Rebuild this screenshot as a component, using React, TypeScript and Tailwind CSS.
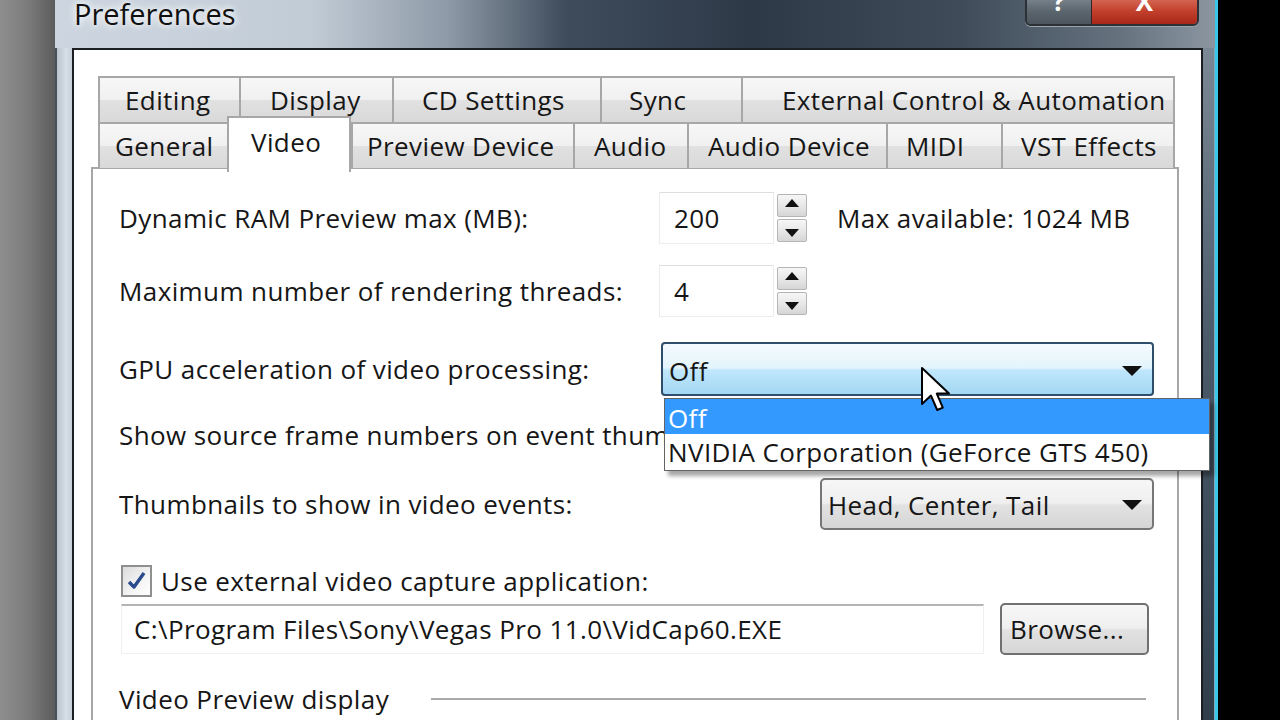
import React from "react";

function Spinner() {
  return (
    <div className="ml-[3px] flex h-[48px] w-[30px] flex-col gap-[2px]">
      <div className="flex h-[23px] items-start justify-center rounded-[2px] border border-[#b5b5b5] bg-[linear-gradient(180deg,#f6f6f6_0%,#e8e8e8_50%,#d6d6d6_100%)] pt-[4px]">
        <svg width="14" height="8" viewBox="0 0 14 8"><path d="M7 0 L14 8 L0 8 Z" fill="#111" /></svg>
      </div>
      <div className="flex h-[23px] items-end justify-center rounded-[2px] border border-[#b5b5b5] bg-[linear-gradient(180deg,#f6f6f6_0%,#e8e8e8_50%,#d6d6d6_100%)] pb-[4px]">
        <svg width="14" height="8" viewBox="0 0 14 8"><path d="M0 0 L14 0 L7 8 Z" fill="#111" /></svg>
      </div>
    </div>
  );
}

function DownArrow() {
  return (
    <svg width="20" height="10" viewBox="0 0 20 10"><path d="M0 0 L20 0 L10 10 Z" fill="#111" /></svg>
  );
}

export default function App() {
  const row1 = [
    { t: "Editing", w: 141, pl: 25 },
    { t: "Display", w: 153, pl: 29 },
    { t: "CD Settings", w: 208, pl: 28 },
    { t: "Sync", w: 141, pl: 27 },
    { t: "External Control & Automation", w: 434, pl: 39 },
  ];
  const row2 = [
    { t: "General", w: 129, pl: 15 },
    { t: "Video", w: 124, pl: 22, sel: true },
    { t: "Preview Device", w: 222, pl: 14 },
    { t: "Audio", w: 114, pl: 19 },
    { t: "Audio Device", w: 199, pl: 19 },
    { t: "MIDI", w: 115, pl: 18 },
    { t: "VST Effects", w: 174, pl: 18 },
  ];

  return (
    <div className="relative flex h-[720px] w-[1280px] overflow-hidden bg-black font-['Open_Sans',sans-serif] text-[26px] tracking-[0.4px] text-[#161616]">
      {/* desktop behind */}
      <div className="w-[55px] shrink-0 bg-[linear-gradient(90deg,#8e8e8e_0%,#7c7c7c_50%,#5c5c5c_100%)]" />

      {/* window */}
      <div className="flex w-[1160px] shrink-0 flex-col">
        {/* title bar */}
        <div className="relative h-[48px] shrink-0 bg-[linear-gradient(90deg,#cdd6e0_0%,#c2ccd7_22%,#8d99a6_34%,#3f4c5b_44%,#2d3947_60%,#3f4b59_78%,#66737f_92%,#8b96a1_100%)]">
          <div className="absolute left-[19px] top-[-8px] text-[29px] tracking-[0px] text-[#101010] [text-shadow:0_0_10px_#ffffff,0_0_6px_#ffffff]">
            Preferences
          </div>
          {/* caption buttons */}
          <div className="absolute left-[970px] top-[-4px] flex h-[30px] overflow-hidden rounded-b-[6px] border-2 border-[#2c3136] shadow-[0_1px_0_#9aa4ae]">
            <div className="flex w-[64px] items-end justify-center bg-[linear-gradient(180deg,#7b858f_0%,#5c666f_50%,#4d565e_100%)] pb-[10px] text-[26px] font-bold leading-none text-white">
              ?
            </div>
            <div className="flex w-[106px] items-end justify-center border-l border-[#3a2020] bg-[linear-gradient(180deg,#d66a58_0%,#c2402c_50%,#a8271a_100%)] pb-[10px] text-[26px] font-bold leading-none text-white">
              X
            </div>
          </div>
        </div>

        {/* frame + client */}
        <div className="flex flex-1">
          <div className="w-[17px] shrink-0 border-l-2 border-[#4a5058] bg-[linear-gradient(90deg,#b8c3ce_0%,#d6dee6_60%,#c6d0da_100%)]" />
          <div className="flex flex-1 flex-col border-2 border-b-0 border-[#1c1f22] bg-white">
            <div className="pl-[17px] pr-[22px] pt-[26px]">
              {/* tabs */}
              <div className="relative z-10 ml-[7px] flex flex-col">
                <div className="flex h-[46px]">
                  {row1.map((t) => (
                    <div
                      key={t.t}
                      style={{ width: t.w, paddingLeft: t.pl }}
                      className="flex items-center whitespace-nowrap border-2 border-r-0 border-b-0 border-[#a7a7a7] bg-[linear-gradient(180deg,#f7f7f7_0%,#f0f0f0_50%,#e1e1e1_51%,#d9d9d9_100%)] last:border-r-2"
                    >
                      {t.t}
                    </div>
                  ))}
                </div>
                <div className="flex h-[46px]">
                  {row2.map((t) =>
                    t.sel ? (
                      <div
                        key={t.t}
                        style={{ width: t.w, paddingLeft: t.pl }}
                        className="relative z-20 -mt-[6px] flex h-[56px] items-start whitespace-nowrap border-2 border-b-0 border-[#a7a7a7] bg-white pt-[5px]"
                      >
                        {t.t}
                      </div>
                    ) : (
                      <div
                        key={t.t}
                        style={{ width: t.w, paddingLeft: t.pl }}
                        className="flex items-center whitespace-nowrap border-2 border-r-0 border-b-0 border-[#a7a7a7] bg-[linear-gradient(180deg,#f7f7f7_0%,#f0f0f0_50%,#e1e1e1_51%,#d9d9d9_100%)] last:border-r-2"
                      >
                        {t.t}
                      </div>
                    )
                  )}
                </div>
              </div>

              {/* panel */}
              <div className="-mt-[1px] flex h-[600px] flex-col border-2 border-b-0 border-[#a7a7a7] bg-white pl-[26px] pr-[23px] pt-[23px]">
                {/* row 1 */}
                <div className="flex h-[52px] items-center">
                  <div className="w-[540px] whitespace-nowrap">Dynamic RAM Preview max (MB):</div>
                  <div className="flex h-[52px] w-[115px] items-center border border-[#ececec] border-t-[#dedede] pl-[14px]">200</div>
                  <Spinner />
                  <div className="ml-[30px] whitespace-nowrap">Max available: 1024 MB</div>
                </div>
                {/* row 2 */}
                <div className="mt-[21px] flex h-[52px] items-center">
                  <div className="w-[540px] whitespace-nowrap">Maximum number of rendering threads:</div>
                  <div className="flex h-[52px] w-[115px] items-center border border-[#ececec] border-t-[#dedede] pl-[14px]">4</div>
                  <Spinner />
                </div>
                {/* row 3 */}
                <div className="mt-[25px] flex h-[54px] items-center">
                  <div className="w-[542px] whitespace-nowrap">GPU acceleration of video processing:</div>
                  <div className="flex h-[54px] flex-1 items-center justify-between rounded-[4px] border-2 border-[#2f4e6c] bg-[linear-gradient(180deg,#f4fbfe_0%,#e3f4fc_48%,#c0e7fc_52%,#a3d7f3_100%)] pl-[6px] pr-[10px] pt-[4px]">
                    <span>Off</span>
                    <DownArrow />
                  </div>
                </div>
                {/* row 4 */}
                <div className="mt-[19px] flex h-[40px] items-center whitespace-nowrap">
                  Show source frame numbers on event thumbnails as:
                </div>
                {/* row 5 */}
                <div className="mt-[23px] flex h-[52px] items-center justify-between">
                  <div className="whitespace-nowrap">Thumbnails to show in video events:</div>
                  <div className="flex h-[52px] w-[334px] items-center justify-between rounded-[5px] border-2 border-[#767676] bg-[linear-gradient(180deg,#f7f7f7_0%,#efefef_48%,#e2e2e2_52%,#d6d6d6_100%)] pl-[6px] pr-[10px] pt-[2px]">
                    <span className="whitespace-nowrap">Head, Center, Tail</span>
                    <DownArrow />
                  </div>
                </div>
                {/* row 6 */}
                <div className="mt-[31px] flex h-[40px] items-center">
                  <div className="ml-[2px] mr-[9px] flex h-[32px] w-[31px] items-center justify-center border-2 border-[#8e8f8f] bg-[linear-gradient(135deg,#dcdcdc_0%,#f4f4f4_60%,#ffffff_100%)]">
                    <svg width="22" height="22" viewBox="0 0 22 22">
                      <path d="M3 12 L8 17 L18 3" fill="none" stroke="#2b4a8c" strokeWidth="3.4" strokeLinejoin="round" />
                    </svg>
                  </div>
                  <span className="whitespace-nowrap">Use external video capture application:</span>
                </div>
                {/* row 7 */}
                <div className="mt-[2px] flex h-[52px] items-center">
                  <div className="ml-[2px] flex h-[50px] w-[863px] items-center border border-[#f0f0f0] border-t-2 border-t-[#b5b5b5] pl-[12px] whitespace-nowrap">
                    C:\Program Files\Sony\Vegas Pro 11.0\VidCap60.EXE
                  </div>
                  <div className="ml-[16px] flex h-[52px] w-[149px] items-center rounded-[5px] border-2 border-[#707070] bg-[linear-gradient(180deg,#f7f7f7_0%,#efefef_48%,#e2e2e2_52%,#d6d6d6_100%)] pl-[8px]">
                    Browse...
                  </div>
                </div>
                {/* row 8 */}
                <div className="mt-[24px] flex h-[40px] items-center">
                  <span className="whitespace-nowrap">Video Preview display</span>
                  <div className="ml-[42px] mr-[8px] h-[2px] flex-1 bg-[#a9a9a9]" />
                </div>
              </div>
            </div>
          </div>
          <div className="w-[12px] shrink-0 border-r border-[#7fa9c0] bg-[linear-gradient(180deg,#7b8996_0%,#4c5b6a_40%,#2c3a48_100%)]" />
        </div>
      </div>

      <div className="w-[3px] shrink-0 bg-[#3ac8e8]" />
      <div className="flex-1 bg-black" />

      {/* dropdown list popup */}
      <div className="absolute left-[664px] top-[398px] flex h-[73px] w-[546px] flex-col border border-[#646464] bg-white shadow-[4px_5px_4px_rgba(0,0,0,0.35)]">
        <div className="flex h-[35px] items-center bg-[#3399ff] pl-[3px] pt-[4px] text-white">Off</div>
        <div className="flex h-[36px] items-center whitespace-nowrap pl-[3px]">NVIDIA Corporation (GeForce GTS 450)</div>
      </div>

      {/* mouse cursor */}
      <svg className="absolute left-[920px] top-[366px]" width="34" height="52" viewBox="0 0 17 26">
        <path d="M1 1 L1 19 L5.5 14.8 L8.6 22 L11.4 20.8 L8.4 13.8 L14.5 13.8 Z" fill="#fff" stroke="#000" strokeWidth="1" strokeLinejoin="round" />
      </svg>
    </div>
  );
}
